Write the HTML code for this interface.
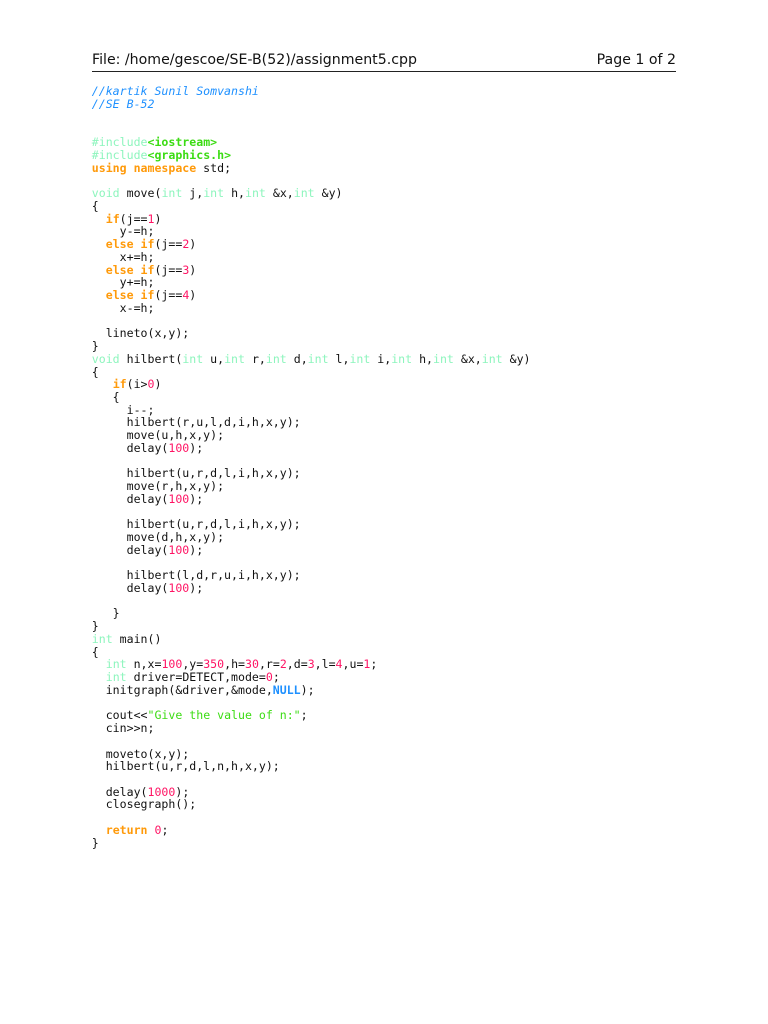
<!DOCTYPE html>
<html><head><meta charset="utf-8"><style>
html,body{margin:0;padding:0;background:#fff;width:768px;height:1024px;overflow:hidden}
body{position:relative;color:#111}
.h{position:absolute;top:50.5px;font:14.15px/18px "DejaVu Sans",sans-serif;white-space:nowrap}
.r{position:absolute;left:92px;top:71px;width:584px;height:1px;background:#222}
pre{position:absolute;left:91.8px;top:85.35px;margin:0;font:11.57px/12.74px "DejaVu Sans Mono",monospace;filter:blur(.25px)}
i{color:#1e90ff}
s{text-decoration:none;color:#8df5bd}
b{color:#ff9a0a}
u{text-decoration:none;color:#ff1464}
em{font-style:normal;color:#3cdc14}
strong{color:#3cdc14}
q{quotes:none;color:#1e90ff;font-weight:bold}
</style></head><body>
<div class="h" style="left:92px">File: /home/gescoe/SE-B(52)/assignment5.cpp</div>
<div class="h" style="right:92px">Page 1 of 2</div>
<div class="r"></div>
<pre><i>//kartik Sunil Somvanshi</i>
<i>//SE B-52</i>


<s>#include</s><strong>&lt;iostream&gt;</strong>
<s>#include</s><strong>&lt;graphics.h&gt;</strong>
<b>using namespace</b> std;

<s>void</s> move(<s>int</s> j,<s>int</s> h,<s>int</s> &amp;x,<s>int</s> &amp;y)
{
  <b>if</b>(j==<u>1</u>)
    y-=h;
  <b>else if</b>(j==<u>2</u>)
    x+=h;
  <b>else if</b>(j==<u>3</u>)
    y+=h;
  <b>else if</b>(j==<u>4</u>)
    x-=h;

  lineto(x,y);
}
<s>void</s> hilbert(<s>int</s> u,<s>int</s> r,<s>int</s> d,<s>int</s> l,<s>int</s> i,<s>int</s> h,<s>int</s> &amp;x,<s>int</s> &amp;y)
{
   <b>if</b>(i&gt;<u>0</u>)
   {
     i--;
     hilbert(r,u,l,d,i,h,x,y);
     move(u,h,x,y);
     delay(<u>100</u>);

     hilbert(u,r,d,l,i,h,x,y);
     move(r,h,x,y);
     delay(<u>100</u>);

     hilbert(u,r,d,l,i,h,x,y);
     move(d,h,x,y);
     delay(<u>100</u>);

     hilbert(l,d,r,u,i,h,x,y);
     delay(<u>100</u>);

   }
}
<s>int</s> main()
{
  <s>int</s> n,x=<u>100</u>,y=<u>350</u>,h=<u>30</u>,r=<u>2</u>,d=<u>3</u>,l=<u>4</u>,u=<u>1</u>;
  <s>int</s> driver=DETECT,mode=<u>0</u>;
  initgraph(&amp;driver,&amp;mode,<q>NULL</q>);

  cout&lt;&lt;<em>"Give the value of n:"</em>;
  cin&gt;&gt;n;

  moveto(x,y);
  hilbert(u,r,d,l,n,h,x,y);

  delay(<u>1000</u>);
  closegraph();

  <b>return</b> <u>0</u>;
}</pre>
</body></html>
